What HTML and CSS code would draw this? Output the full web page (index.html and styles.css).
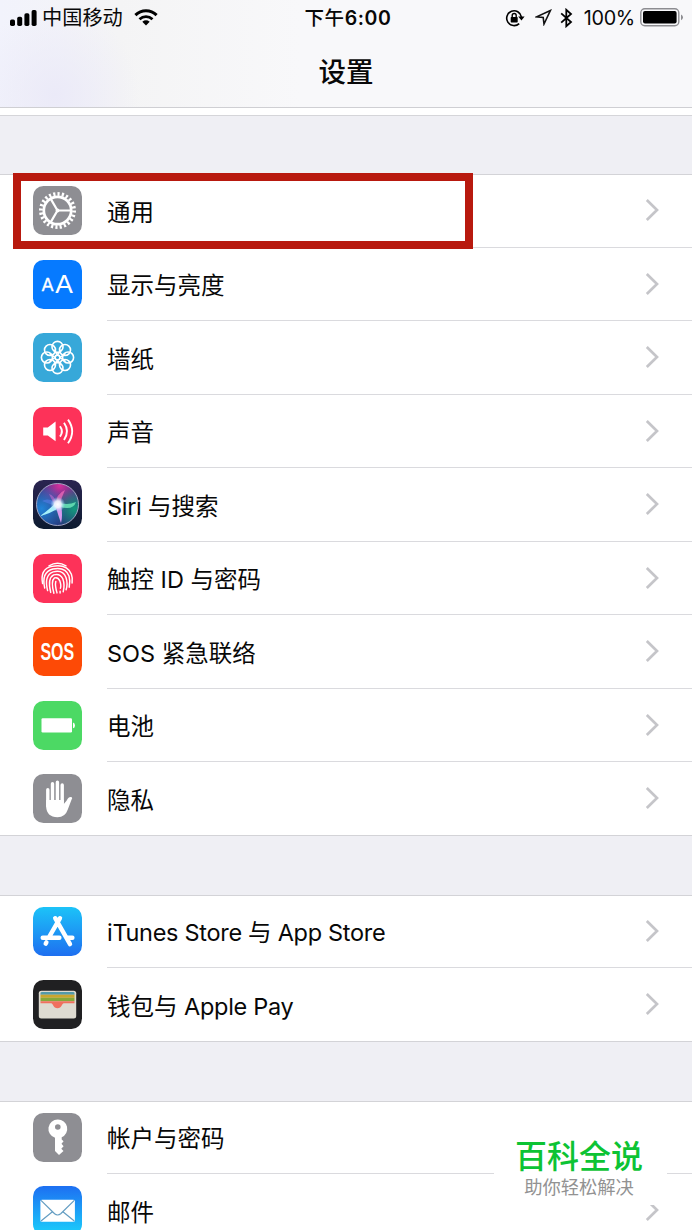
FILE: index.html
```html
<!DOCTYPE html>
<html lang="zh-CN">
<head>
<meta charset="utf-8">
<title>设置</title>
<link rel="stylesheet" href="styles.css">
</head>
<body>
<svg class="defs" width="0" height="0">
  <defs>
    <symbol id="chevron" viewBox="0 0 14 24"><path d="M1.8 2 L12 12 L1.8 22" fill="none" stroke="#c5c5c9" stroke-width="2.7"/></symbol>
    <linearGradient id="storeBg" x1="0" y1="0" x2="0" y2="1"><stop offset="0" stop-color="#1cc3f8"/><stop offset="1" stop-color="#1e6ff0"/></linearGradient>
    <linearGradient id="mailBg" x1="0" y1="0" x2="0" y2="1"><stop offset="0" stop-color="#1d6ff2"/><stop offset="1" stop-color="#1bd0fb"/></linearGradient>
    <linearGradient id="siriBg" x1="0" y1="0" x2="0" y2="1"><stop offset="0" stop-color="#2a2450"/><stop offset="1" stop-color="#0d1b30"/></linearGradient>
    <radialGradient id="siriPink" cx=".55" cy=".05" r=".65"><stop offset="0" stop-color="#d62f9c"/><stop offset="1" stop-color="#8f2f9c" stop-opacity="0"/></radialGradient>
    <radialGradient id="siriBlue" cx=".12" cy=".6" r=".6"><stop offset="0" stop-color="#2184d8"/><stop offset="1" stop-color="#2184d8" stop-opacity="0"/></radialGradient>
    <radialGradient id="siriGreen" cx=".9" cy=".6" r=".5"><stop offset="0" stop-color="#139a7c"/><stop offset="1" stop-color="#139a7c" stop-opacity="0"/></radialGradient>
    <radialGradient id="siriGlow"><stop offset="0" stop-color="#fff"/><stop offset=".45" stop-color="#eef6ff" stop-opacity=".9"/><stop offset="1" stop-color="#9ad0ff" stop-opacity="0"/></radialGradient>
  </defs>
</svg>
<div class="screen">
  <header class="topbar">
    <div class="status">
      <div class="status-left">
        <svg class="signal" width="28" height="18" viewBox="0 0 28 18"><rect x="0" y="10.5" width="5" height="6.5" rx="1.7"/><rect x="7.2" y="7.7" width="5" height="9.3" rx="1.7"/><rect x="14.4" y="4.2" width="5" height="12.8" rx="1.7"/><rect x="21.6" y="1" width="5" height="16" rx="1.7"/></svg>
        <span class="carrier">中国移动</span>
        <svg class="wifi" width="24" height="17" viewBox="0 0 24 17"><path d="M1.4 6.2 C7.4 .4 16.6 .4 22.6 6.2" fill="none" stroke="#000" stroke-width="3"/><path d="M5.5 10.3 C9.3 6.8 14.7 6.8 18.5 10.3" fill="none" stroke="#000" stroke-width="2.8"/><path d="M8.3 12.8 Q12 9.9 15.7 12.8 L12 16.5Z"/></svg>
      </div>
      <div class="clock">下午<b>6:00</b></div>
      <div class="status-right">
        <svg class="lock" width="20" height="18" viewBox="0 0 20 18"><path d="M14.2 14.6 A7.4 7.4 0 1 1 16.4 8" fill="none" stroke="#000" stroke-width="1.6"/><path d="M13.2 7.5 H19.6 L16.5 11.5Z"/><rect x="5.7" y="8" width="7" height="5.4" rx=".7"/><path d="M7.2 8.5 V6.5 A2 2 0 0 1 11.2 6.5 V8.5" fill="none" stroke="#000" stroke-width="1.4"/></svg>
        <svg class="arrow" width="17" height="17" viewBox="0 0 17 17"><path d="M15.4 1.6 L1.6 7.8 L8.2 8.4 L9 15Z" fill="none" stroke="#111" stroke-width="1.6"/></svg>
        <svg class="bluetooth" width="13" height="20" viewBox="0 0 13 20"><path d="M1.2 5.3 L11 14 L6.3 18.2 V1.8 L11 6 L1.2 14.7" fill="none" stroke="#000" stroke-width="1.8"/></svg>
        <span class="percent">100%</span>
        <svg class="cell" width="44" height="19" viewBox="0 0 44 19"><rect x=".8" y=".8" width="38" height="17" rx="4" fill="none" stroke="#8d8d91" stroke-width="1.4"/><rect x="3" y="3" width="33.6" height="12.6" rx="2"/><path d="M41 6.4 Q43 7.4 43 9.3 Q43 11.3 41 12.3Z" fill="#8d8d91"/></svg>
      </div>
    </div>
    <h1 class="title">设置</h1>
  </header>
  <div class="sliver"></div>
  <main>
    <section class="group">
      <div class="row marked">
        <svg class="icon" viewBox="0 0 49 49"><rect width="49" height="49" rx="10.5" fill="#8e8e93"/><g fill="none" stroke="#fff"><circle cx="24.5" cy="24.5" r="16.6" stroke-width="3.8" pathLength="48" stroke-dasharray="1 1"/><circle cx="24.5" cy="24.5" r="13.7" stroke-width="2.7"/><path d="M24.5 24.5 H38 M24.5 24.5 L17.6 12.6 M24.5 24.5 L17.6 36.4" stroke-width="2.2"/></g><circle cx="24.5" cy="24.5" r="1.9" fill="#fff"/></svg>
        <div class="body"><span class="label">通用</span><svg class="chevron"><use href="#chevron"/></svg></div>
      </div>
      <div class="row">
        <svg class="icon" viewBox="0 0 49 49"><rect width="49" height="49" rx="10.5" fill="#067aff"/><text class="small-a" x="8.8" y="31">A</text><text class="large-a" x="22.2" y="33.3">A</text></svg>
        <div class="body"><span class="label">显示与亮度</span><svg class="chevron"><use href="#chevron"/></svg></div>
      </div>
      <div class="row">
        <svg class="icon" viewBox="0 0 49 49"><rect width="49" height="49" rx="10.5" fill="#37a8d9"/><g fill="none" stroke="#fff" stroke-width="1.6"><circle cx="24.5" cy="13.9" r="5.5"/><circle cx="32" cy="17" r="5.5"/><circle cx="35.1" cy="24.5" r="5.5"/><circle cx="32" cy="32" r="5.5"/><circle cx="24.5" cy="35.1" r="5.5"/><circle cx="17" cy="32" r="5.5"/><circle cx="13.9" cy="24.5" r="5.5"/><circle cx="17" cy="17" r="5.5"/><path d="M24.5 22 L20.7 16.6 M24.5 22 L28.3 16.6 M24.5 27 L20.7 32.4 M24.5 27 L28.3 32.4 M22 24.5 L16.6 20.7 M22 24.5 L16.6 28.3 M27 24.5 L32.4 20.7 M27 24.5 L32.4 28.3"/><circle cx="24.5" cy="24.5" r="2.4"/></g></svg>
        <div class="body"><span class="label">墙纸</span><svg class="chevron"><use href="#chevron"/></svg></div>
      </div>
      <div class="row">
        <svg class="icon" viewBox="0 0 49 49"><rect width="49" height="49" rx="10.5" fill="#fd3259"/><path d="M10.2 20.4 H14.8 L22.6 14.6 V34.2 L14.8 28.6 H10.2Z" fill="#fff"/><path d="M27 19.2 Q30.8 24.4 27 29.6 M31 15.8 Q37 24.4 31 33 M35 12.6 Q43.4 24.4 35 36.2" fill="none" stroke="#fff" stroke-width="1.9"/></svg>
        <div class="body"><span class="label">声音</span><svg class="chevron"><use href="#chevron"/></svg></div>
      </div>
      <div class="row">
        <svg class="icon" viewBox="0 0 49 49"><rect width="49" height="49" rx="10.5" fill="url(#siriBg)"/><circle cx="24.5" cy="24.5" r="21" fill="#26387b"/><circle cx="24.5" cy="24.5" r="21" fill="url(#siriPink)"/><circle cx="24.5" cy="24.5" r="21" fill="url(#siriBlue)"/><circle cx="24.5" cy="24.5" r="21" fill="url(#siriGreen)"/><path d="M24 23 Q15 17 9 21 Q16 24 24 26Z" fill="#4f7ae0" opacity=".7"/><path d="M23 22.5 Q17 29 7 36 Q19 33 27 27Z" fill="#a5f0fa"/><path d="M24 22 Q34 26 43 22 Q40 31 26 26.5Z" fill="#66e0b5" opacity=".9"/><path d="M22 24 Q25 35 28 43 Q30 35 28 25Z" fill="#d79bef"/><path d="M23 24 Q23 14 32 10 Q28 18 27 25Z" fill="#f06bb9" opacity=".75"/><path d="M24 24 Q21 15 16 14 Q19 21 23 26Z" fill="#c56bd0" opacity=".6"/><circle cx="24.8" cy="24.3" r="7.5" fill="url(#siriGlow)"/><circle cx="24.5" cy="24.5" r="21" fill="none" stroke="#aeb0cc" stroke-width=".9"/></svg>
        <div class="body"><span class="label"><span class="latin">Siri</span> 与搜索</span><svg class="chevron"><use href="#chevron"/></svg></div>
      </div>
      <div class="row">
        <svg class="icon" viewBox="0 0 49 49"><rect width="49" height="49" rx="10.5" fill="#fd3259"/><g fill="none" stroke="#fff" stroke-width="1.45" stroke-linecap="round"><path d="M16 11.8 Q24.5 6.6 33 11.8"/><path d="M9.6 29.6 Q6.8 14.8 19 12.4 Q34 9.5 38.4 20.3 Q39.8 24 39.1 29"/><path d="M11.7 34 Q8.1 18.2 19.8 15 Q32.5 12.4 36 22 Q37.5 27 36.2 33.2"/><path d="M14.6 36.6 Q10.8 21.3 20.2 17.9 Q30 15.4 33 23.4 Q35 29.5 33.1 35.8"/><path d="M17.7 38.4 Q14.2 24.2 20.7 20.9 Q27 18.9 29.8 24.7 Q32 30.6 30.2 37.8"/><path d="M20.9 39.2 Q17.6 27 21.5 23.9 Q25 22.8 26.7 26.6 Q28.5 31.8 27.4 34.3 M27.1 37.1 V38.9"/><path d="M24 38.9 Q21.8 31.5 22.8 27.4"/></g></svg>
        <div class="body"><span class="label">触控 ID 与密码</span><svg class="chevron"><use href="#chevron"/></svg></div>
      </div>
      <div class="row">
        <svg class="icon" viewBox="0 0 49 49"><rect width="49" height="49" rx="10.5" fill="#fd4a06"/><text class="sos" transform="translate(7.4 32.8) scale(.68 1)">SOS</text></svg>
        <div class="body"><span class="label">SOS 紧急联络</span><svg class="chevron"><use href="#chevron"/></svg></div>
      </div>
      <div class="row">
        <svg class="icon" viewBox="0 0 49 49"><rect width="49" height="49" rx="10.5" fill="#4cd964"/><rect x="8.5" y="17.2" width="30.5" height="14.2" rx="1.2" fill="#fff"/><path d="M40 21.5 Q42 22 42 24.4 Q42 26.8 40 27.3Z" fill="#fff"/></svg>
        <div class="body"><span class="label">电池</span><svg class="chevron"><use href="#chevron"/></svg></div>
      </div>
      <div class="row last">
        <svg class="icon" viewBox="0 0 49 49"><rect width="49" height="49" rx="10.5" fill="#8e8e93"/><g stroke="#fff" stroke-width="3.4" stroke-linecap="round" fill="none"><path d="M14.8 15.8 V32 M19.5 9.8 V29 M24.4 8.3 V29 M29.2 11 V29"/></g><path d="M13.1 26 H30.8 V30 Q33.5 27.5 34.9 24.6 Q36.2 22.2 38.8 23.3 Q39.7 24 38.6 25.6 L34.8 35.5 Q32.3 43.2 24.5 43.2 Q13.5 43.2 13.1 32Z" fill="#fff"/></svg>
        <div class="body"><span class="label">隐私</span><svg class="chevron"><use href="#chevron"/></svg></div>
      </div>
    </section>
    <section class="group">
      <div class="row">
        <svg class="icon" viewBox="0 0 49 49"><rect width="49" height="49" rx="10.5" fill="url(#storeBg)"/><g stroke="#fff" stroke-width="4.4" stroke-linecap="round" fill="none"><path d="M27 11.2 L16.2 29.8 M13.4 35.4 L12.7 36.6 M22.2 11.2 L37 37.2 M9.7 30.8 H26.4 M35 30.8 H39.4"/></g></svg>
        <div class="body"><span class="label latin">iTunes Store 与 App Store</span><svg class="chevron"><use href="#chevron"/></svg></div>
      </div>
      <div class="row last">
        <svg class="icon" viewBox="0 0 49 49"><rect width="49" height="49" rx="10.5" fill="#202022"/><rect x="5.8" y="10.7" width="37.4" height="27.8" rx="2.5" fill="#dedbd1"/><path d="M7.5 14 V13 Q7.5 12 9 12 H40 Q41.5 12 41.5 13 V14.7 H7.5Z" fill="#529aaa"/><rect x="7.5" y="14.7" width="34" height="3.1" fill="#c9a62f"/><rect x="7.5" y="17.8" width="34" height="3.4" fill="#86a83a"/><path d="M7.5 21.2 H41.5 V23.2 H30.8 C29 23.2 28.8 28.2 24.5 28.2 C20.2 28.2 20 23.2 18.2 23.2 H7.5Z" fill="#f0705e"/></svg>
        <div class="body"><span class="label">钱包与 <span class="latin">Apple Pay</span></span><svg class="chevron"><use href="#chevron"/></svg></div>
      </div>
    </section>
    <section class="group">
      <div class="row">
        <svg class="icon" viewBox="0 0 49 49"><rect width="49" height="49" rx="10.5" fill="#8e8e93"/><path fill-rule="evenodd" d="M24.8 6.5 A9.3 9.3 0 0 1 28.7 24.3 V26.4 L30.6 28.3 L28.5 30.8 L30.6 33.2 L28.3 35.8 L30.5 38 L26 42 L22 38 V24.7 A9.3 9.3 0 0 1 24.8 6.5Z M24.8 11.2 A2.8 2.8 0 1 0 24.8 16.8 A2.8 2.8 0 1 0 24.8 11.2Z" fill="#fff"/></svg>
        <div class="body"><span class="label">帐户与密码</span><svg class="chevron"><use href="#chevron"/></svg></div>
      </div>
      <div class="row">
        <svg class="icon" viewBox="0 0 49 49"><rect width="49" height="49" rx="10.5" fill="url(#mailBg)"/><rect x="7.4" y="13.7" width="34.5" height="22" rx="1.5" fill="#fff"/><path d="M8 14.4 L21.6 27.8 Q24.6 30.2 27.7 27.8 L41.3 14.4 M8 35 L19.4 25.8 M41.3 35 L29.9 25.8" fill="none" stroke="#639dc2" stroke-width="1.2"/></svg>
        <div class="body"><span class="label">邮件</span><svg class="chevron"><use href="#chevron"/></svg></div>
      </div>
    </section>
  </main>
  <aside class="watermark">
    <div class="brand">百科全说</div>
    <div class="slogan">助你轻松解决</div>
  </aside>
</div>
</body>
</html>
```
FILE: styles.css
```css
*, *::after { box-sizing: border-box; }
body {
  margin: 0;
  background: #efeff4;
  color: #080808;
  font-family: Inter, "Noto Sans CJK SC", sans-serif;
}
svg { display: block; flex: none; }
.defs { position: absolute; }
.screen { position: relative; width: 692px; height: 1230px; overflow: hidden; }

.topbar {
  height: 108px;
  border-bottom: 1px solid #cfcfd3;
  background:
    radial-gradient(ellipse 85px 90px at 55px 95px, #ebeaf8 0%, rgba(240, 240, 248, 0) 100%),
    linear-gradient(90deg, #f2f3fc 0, #f4f4f5 120px, #f8f8fa 300px, #f8f8fa 100%);
}
.status {
  display: grid;
  grid-template-columns: 1fr auto 1fr;
  align-items: center;
  height: 35px;
  padding: 0 8px 0 10px;
}
.status-left, .status-right { display: flex; align-items: center; }
.status-right { justify-content: flex-end; }
.carrier { margin-left: 4px; font-size: 20.2px; line-height: 30px; }
.wifi { margin-left: 11px; }
.clock { padding: 1px 0 0 2px; font-size: 19.5px; line-height: 30px; font-weight: 500; letter-spacing: .6px; }
.clock b { font-weight: 600; }
.arrow { margin-left: 10px; }
.bluetooth { margin-left: 8px; }
.percent { margin-left: 11px; font-size: 19.8px; letter-spacing: -.3px; }
.cell { margin-left: 5px; }
.title {
  margin: 16.5px 0 0;
  text-align: center;
  font-size: 27.5px;
  line-height: 40px;
  font-weight: 500;
}
.sliver { height: 8px; background: #fff; border-bottom: 1px solid #d5d5d9; }

main { padding-top: 58px; }
.group {
  margin-bottom: 59px;
  box-shadow: inset 0 1px #d3d3d7;
  background: #fff;
}
.row { display: flex; align-items: center; height: 73.5px; padding-left: 33px; }
.row.last { border-bottom: 1px solid #d3d3d7; }
.icon { width: 49px; height: 49px; margin-right: 25px; }
.body {
  flex: 1;
  display: flex;
  align-items: center;
  justify-content: space-between;
  height: 100%;
  padding-right: 33px;
  border-bottom: 1px solid #dadade;
  font-size: 23.5px;
  line-height: 36px;
}
.label { padding-top: 5px; }
.latin { letter-spacing: -.3px; }
.row.last .body { border-bottom: 0; }
.chevron { width: 14px; height: 24px; }
.marked { position: relative; }
.marked::after {
  content: "";
  position: absolute;
  left: 13px;
  top: -1px;
  width: 460px;
  height: 76px;
  border: 8px solid #b8190e;
}

.small-a, .large-a { fill: #fff; font-family: "Liberation Sans", sans-serif; }
.small-a { font-size: 17.5px; stroke: #fff; stroke-width: .4px; }
.large-a { font-size: 26.4px; }
.sos { fill: #fff; font-family: "Liberation Sans", sans-serif; font-weight: 700; font-size: 23.5px; }

.watermark {
  position: absolute;
  left: 494px;
  top: 1122px;
  width: 173px;
  height: 83px;
  padding: 15px 3px 0 0;
  background: #fff;
  text-align: center;
}
.brand { color: #0dc334; font-size: 32px; line-height: 40px; font-weight: 500; }
.slogan { color: #929292; font-size: 18.3px; line-height: 20px; }
```
